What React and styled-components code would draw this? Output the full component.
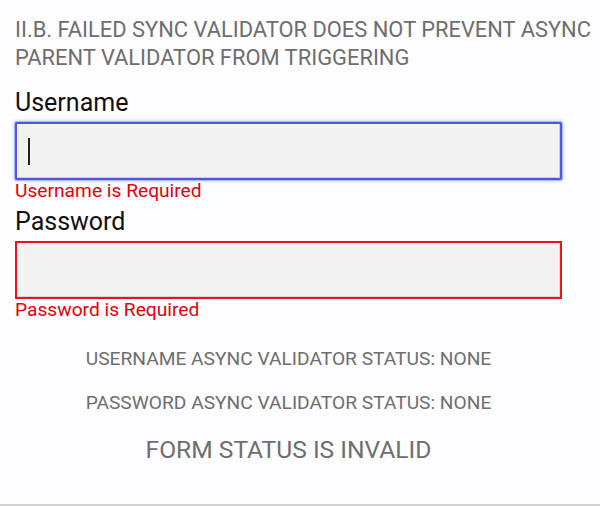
import React from "react";
import styled, { createGlobalStyle } from "styled-components";

const Global = createGlobalStyle`
  html, body { margin: 0; padding: 0; background: #fdfcfe; }
  body { font-family: Roboto, "Liberation Sans", Arial, sans-serif; }
  * { box-sizing: border-box; }
`;

const Page = styled.div`
  width: 600px;
  height: 506px;
  padding: 16px 38px 0 15px;
  border-bottom: 2px solid #d2d2d2;
  display: flex;
  flex-direction: column;
  overflow: hidden;
`;

const Title = styled.h1`
  margin: 0 0 16px;
  font-size: 21.9px;
  line-height: 28px;
  font-weight: 400;
  color: #6e6e70;
  text-transform: uppercase;
  white-space: nowrap;
`;

const Field = styled.div`
  display: flex;
  flex-direction: column;
  margin-bottom: ${(p) => p.$gap || 0}px;
`;

const Label = styled.label`
  font-size: 25px;
  line-height: 30px;
  color: #111;
  margin-bottom: 4px;
`;

const InputBox = styled.div`
  height: 58px;
  display: flex;
  align-items: center;
  padding-left: 11px;
  background: #f2f2f3;
  border: 2px solid ${(p) => (p.$focused ? "#5553e0" : "#f0101a")};
  border-radius: ${(p) => (p.$focused ? "2px" : "0")};
  box-shadow: ${(p) =>
    p.$focused
      ? "0 0 0 1px #9fc0f6, 0 0 3px 1px rgba(120,165,240,0.6), inset -1px -1px 0 #cfcfd2"
      : "inset -1px -1px 0 #d8d8da"};
`;

const Caret = styled.span`
  display: block;
  width: 2px;
  height: 27px;
  background: #222;
`;

const Error = styled.div`
  font-size: 19.2px;
  line-height: 22px;
  color: #e8000b;
`;

const Status = styled.p`
  margin: 0 0 ${(p) => p.$mb}px;
  text-align: center;
  font-size: ${(p) => p.$size}px;
  line-height: ${(p) => p.$lh}px;
  color: #6e6e70;
  text-transform: uppercase;
`;

const Statuses = styled.div`
  margin-top: 27px;
  display: flex;
  flex-direction: column;
`;

export default function App() {
  return (
    <>
      <Global />
      <Page>
        <Title>
          II.B. Failed sync validator does not prevent async
          <br />
          parent validator from triggering
        </Title>
        <Field $gap={5}>
          <Label>Username</Label>
          <InputBox $focused>
            <Caret />
          </InputBox>
          <Error>Username is Required</Error>
        </Field>
        <Field>
          <Label>Password</Label>
          <InputBox />
          <Error>Password is Required</Error>
        </Field>
        <Statuses>
          <Status $size={19.2} $lh={22} $mb={22}>
            Username async validator status: NONE
          </Status>
          <Status $size={19.2} $lh={22} $mb={22}>
            Password async validator status: NONE
          </Status>
          <Status $size={24.6} $lh={28} $mb={0}>
            Form status is INVALID
          </Status>
        </Statuses>
      </Page>
    </>
  );
}
